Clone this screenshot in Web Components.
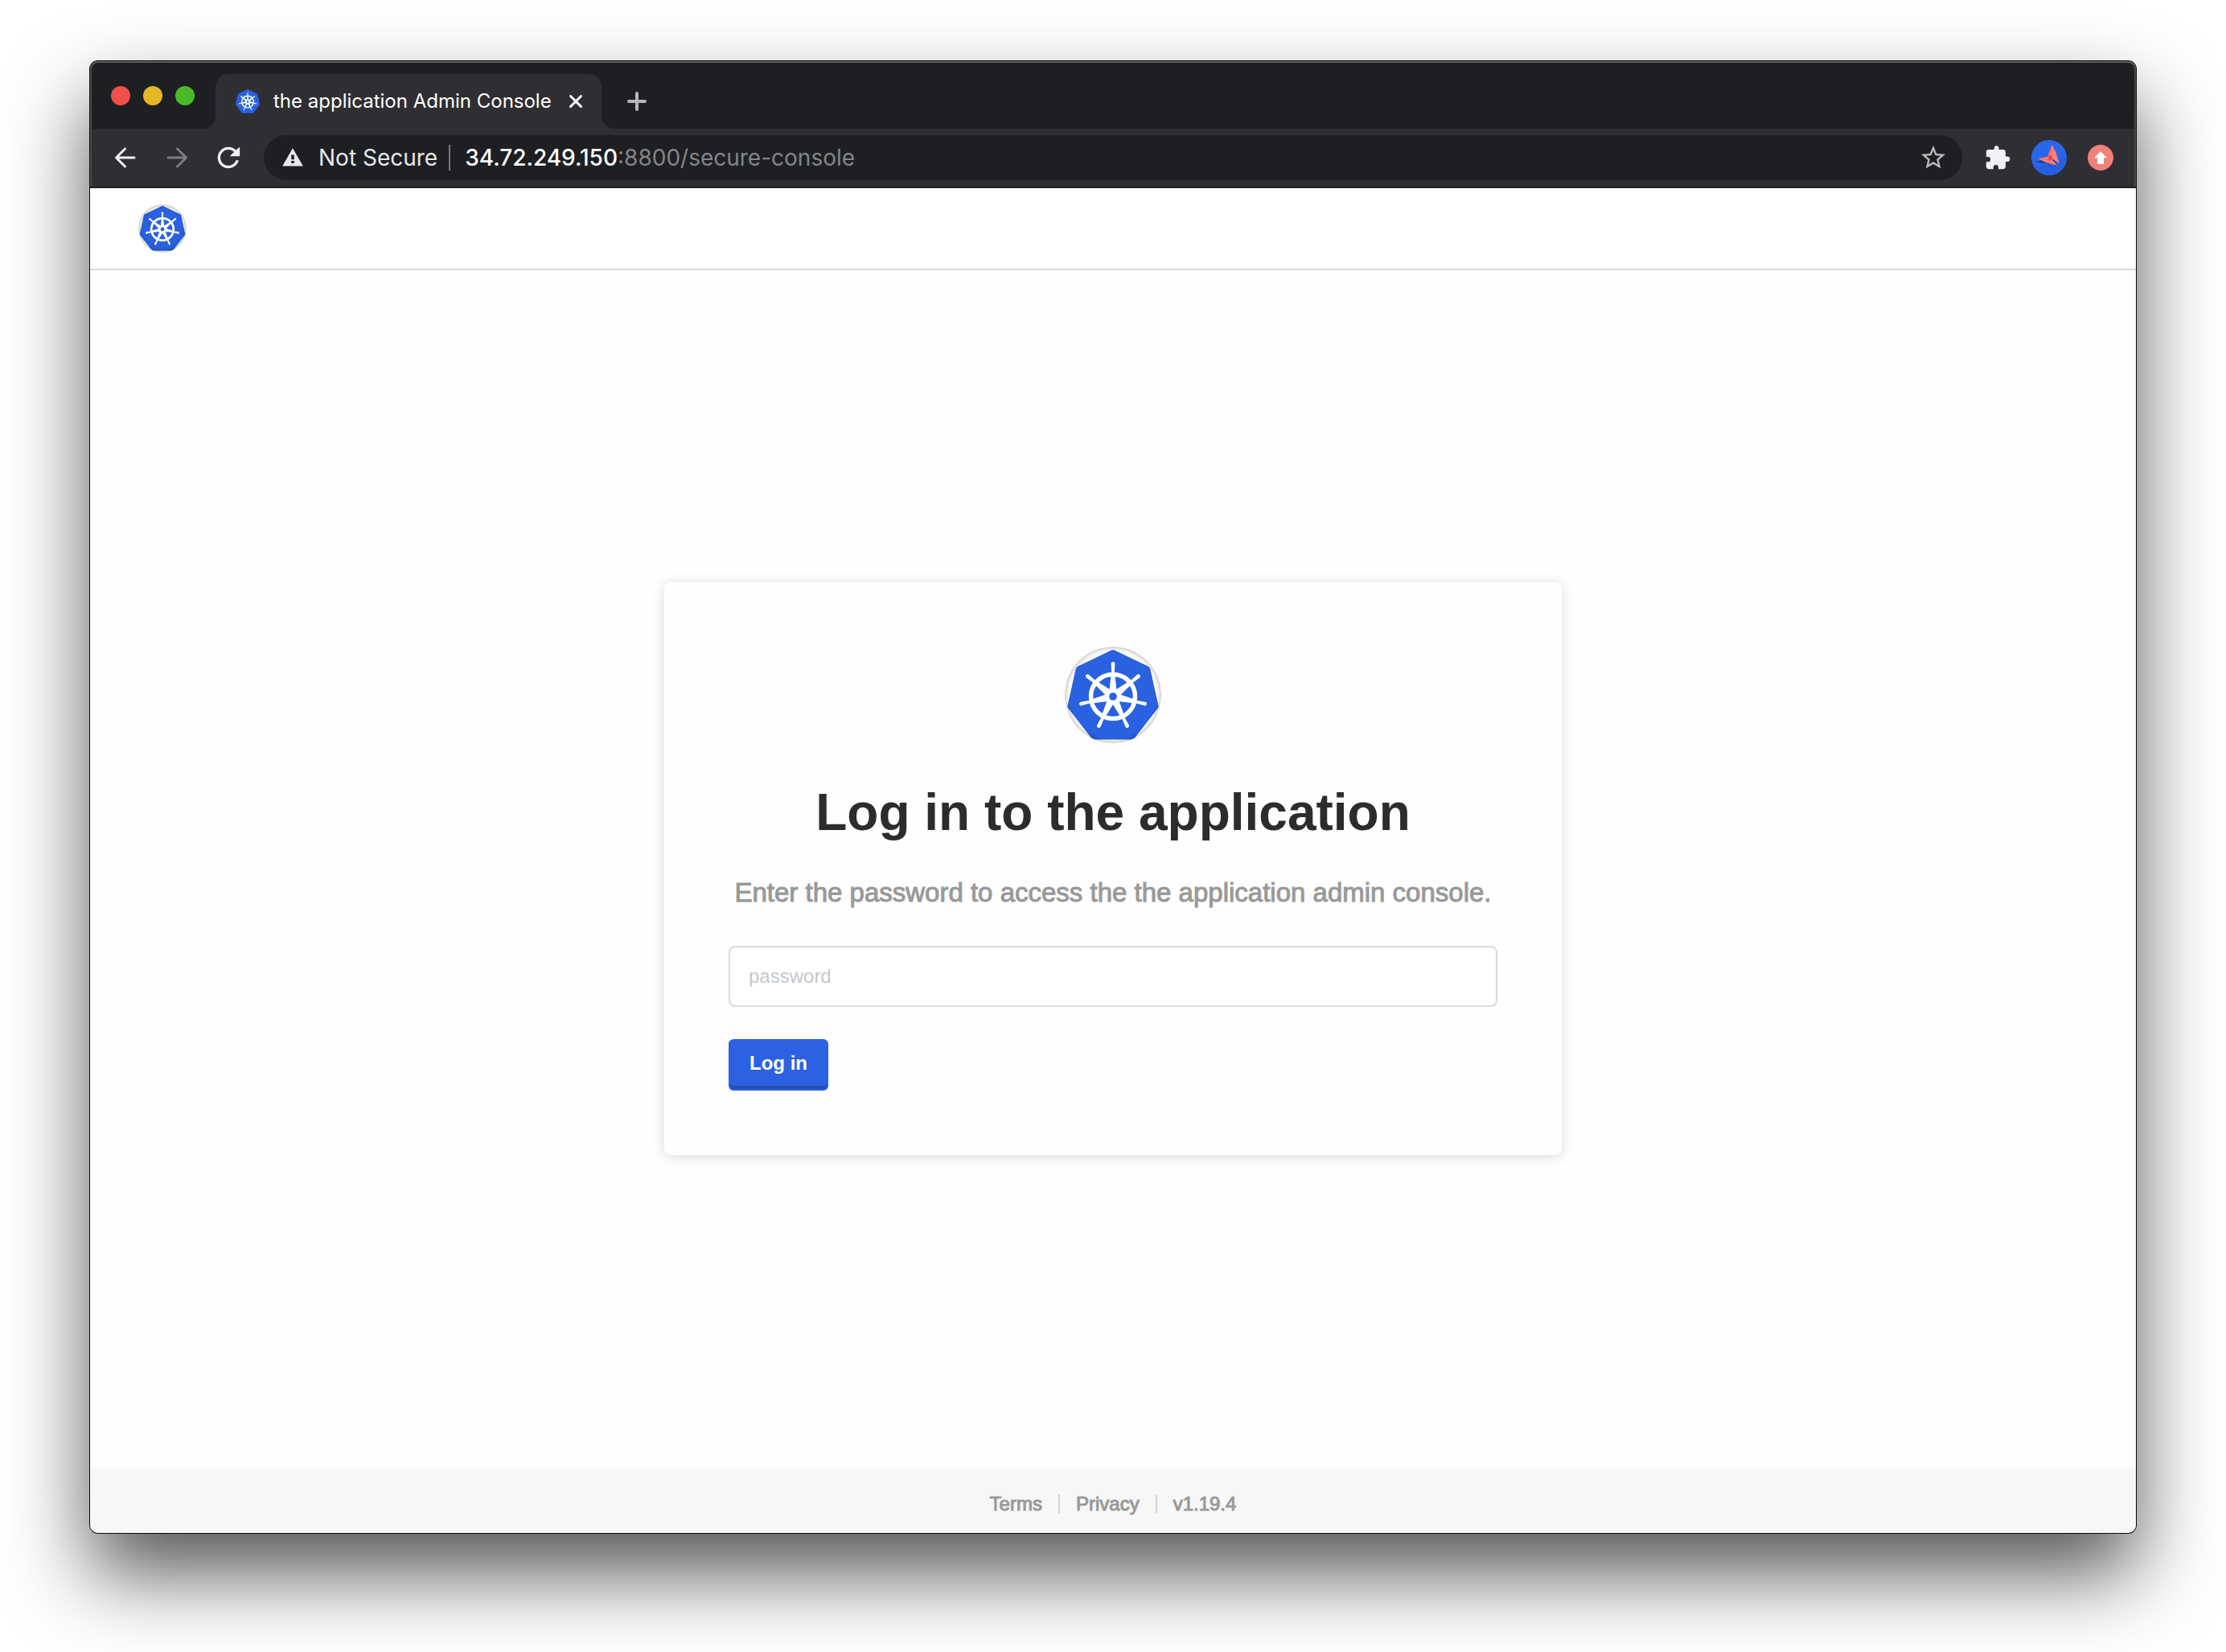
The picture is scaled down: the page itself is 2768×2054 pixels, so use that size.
<!DOCTYPE html>
<html lang="en">
<head>
<meta charset="utf-8">
<title>the application Admin Console</title>
<style>
  html, body { height: 100%; }
  body {
    margin: 0;
    background: #fff;
    font-family: "Liberation Sans", Arial, sans-serif;
    font-size: 24px;
  }
</style>
</head>
<body>
<browser-window>
  <tab-strip slot="tabs" label="the application Admin Console"></tab-strip>
  <tool-bar slot="toolbar">
    <address-bar slot="address" host="34.72.249.150" rest=":8800/secure-console"></address-bar>
  </tool-bar>
  <site-header></site-header>
  <site-main>
    <login-card>
      <span slot="title">Log in to the application</span>
      <span slot="hint">Enter the password to access the the application admin console.</span>
    </login-card>
  </site-main>
  <site-footer>
    <a href="#terms">Terms</a>
    <a href="#privacy">Privacy</a>
    <span>v1.19.4</span>
  </site-footer>
</browser-window>

<script>
const define = (name, html, setup) => {
  const template = document.createElement('template');
  template.innerHTML = html;
  customElements.define(name, class extends HTMLElement {
    constructor() {
      super();
      this.attachShadow({ mode: 'open' }).append(template.content.cloneNode(true));
    }
    connectedCallback() {
      if (setup) setup(this, this.shadowRoot);
    }
  });
};

const spokes = Array.from({ length: 7 }, (_, i) =>
  `<g transform="rotate(${(i * 360 / 7).toFixed(2)} 60 62)">
     <path d="M55.500 54.500 57.500 36h5l2 18.500z"/>
     <path d="M58.300 34.500 57.600 21.500a2.400 2.400 0 0 1 4.800 0L61.700 34.500z"/>
   </g>`).join('');

define('helm-logo', `
  <style>
    :host { display: block; flex: none; width: var(--logo-size, 32px); height: var(--logo-size, 32px); position: relative; }
    :host([round]) { border-radius: 50%; overflow: hidden; }
    :host([round])::after {
      content: ""; position: absolute; inset: 0; border-radius: 50%;
      box-shadow: inset 0 0 6px rgba(0, 0, 0, .4);
    }
    svg { display: block; width: 100%; height: 100%; }
  </style>
  <svg viewBox="0 0 120 120" aria-hidden="true">
    <path d="M60 9 101.500 29 111.500 74 83 110.500H37L8.500 74 18.500 29z" fill="#2a61e0" stroke="#2a61e0" stroke-width="10" stroke-linejoin="round"/>
    <circle cx="60" cy="62" r="27.500" fill="none" stroke="#fff" stroke-width="5.500"/>
    <g fill="#fff">${spokes}<circle cx="60" cy="62" r="9"/></g>
    <circle cx="60" cy="62" r="4.800" fill="#2a61e0"/>
  </svg>`);

define('browser-window', `
  <style>
    :host {
      display: flex; flex-direction: column; box-sizing: border-box;
      min-height: 100vh; padding: 76px 112px 148px; overflow: hidden;
    }
    .frame {
      flex: 1; display: flex; flex-direction: column;
      border-radius: 10px; background: #fefefe;
      box-shadow: 0 0 0 1px #0a0a0a, 0 50px 100px rgba(0, 0, 0, .67);
    }
    .chrome {
      display: flex; flex-direction: column; overflow: hidden; position: relative;
      border-radius: 10px 10px 0 0; background: #2f2e32; border-bottom: 2px solid #231f22;
    }
    .chrome::after {
      content: ""; position: absolute; inset: 0; pointer-events: none; border-radius: 10px 10px 0 0;
      box-shadow: inset 0 2px 0 #5f6062, inset 2px 0 0 #4b4b4d, inset -2px 0 0 #4b4b4d;
    }
  </style>
  <div class="frame">
    <div class="chrome"><slot name="tabs"></slot><slot name="toolbar"></slot></div>
    <slot></slot>
  </div>`);

define('tab-strip', `
  <style>
    :host { display: flex; height: 84px; background: #1e1f22; font-family: Inter, sans-serif; }
    .lights { display: flex; gap: 16px; padding: 31px 26px 0; }
    .lights button { width: 24px; height: 24px; padding: 0; border: 0; border-radius: 50%; background: var(--c); }
    .tab {
      display: flex; align-items: center; box-sizing: border-box; position: relative;
      width: 480px; margin-top: 16px; padding: 0 16px 0 24px;
      background: #2f2e32; border-radius: 16px 16px 0 0; color: #fff;
    }
    .tab::before, .tab::after {
      content: ""; position: absolute; bottom: 0; width: 16px; height: 16px;
    }
    .tab::before { right: 100%; background: radial-gradient(circle at 0 0, transparent 16px, #2f2e32 16px); }
    .tab::after { left: 100%; background: radial-gradient(circle at 100% 0, transparent 16px, #2f2e32 16px); }
    .title { flex: 1; margin-left: 16px; font-size: 24px; line-height: 32px; white-space: nowrap; }
    .icon { display: grid; place-items: center; width: 32px; height: 32px; padding: 0; border: 0; background: none; }
    .add { margin: 34px 0 0 28px; }
    svg { display: block; fill: none; stroke-linecap: round; }
  </style>
  <div class="lights">
    <button style="--c:#ef5049" aria-label="Close window"></button>
    <button style="--c:#e3b726" aria-label="Minimise window"></button>
    <button style="--c:#4bb928" aria-label="Zoom window"></button>
  </div>
  <div class="tab">
    <helm-logo></helm-logo>
    <span class="title"></span>
    <button class="icon" aria-label="Close tab"><svg width="20" height="20" viewBox="0 0 20 20" stroke="#fff" stroke-width="3"><path d="M3.500 3.500l13 13M16.500 3.500l-13 13"/></svg></button>
  </div>
  <button class="icon add" aria-label="New tab"><svg width="26" height="26" viewBox="0 0 26 26" stroke="#b5b7bc" stroke-width="4"><path d="M13 3v20M3 13h20"/></svg></button>`,
  (host, root) => { root.querySelector('.title').textContent = host.getAttribute('label'); });

define('tool-bar', `
  <style>
    :host { display: flex; align-items: center; gap: 8px; height: 72px; padding: 0 16px; }
    button { display: grid; place-items: center; width: 56px; height: 56px; padding: 0; border: 0; background: none; }
    slot { display: flex; flex: 1; margin: 0 8px; }
    svg { display: block; }
    .line { fill: none; stroke-width: 3; stroke-linecap: round; stroke-linejoin: round; }
  </style>
  <button aria-label="Back"><svg class="line" width="32" height="32" viewBox="0 0 32 32" stroke="#f1f1f3"><path d="M15.500 5l-11 11 11 11M5 16h22"/></svg></button>
  <button aria-label="Forward"><svg class="line" width="32" height="32" viewBox="0 0 32 32" stroke="#7d7d80"><path d="M16.500 5l11 11-11 11M27 16H5"/></svg></button>
  <button aria-label="Reload"><svg width="40" height="40" viewBox="0 0 24 24" fill="#f1f1f3"><path d="M17.650 6.350C16.200 4.900 14.210 4 12 4c-4.420 0-7.990 3.580-7.990 8s3.570 8 7.990 8c3.730 0 6.840-2.550 7.730-6h-2.080c-.82 2.330-3.040 4-5.650 4-3.310 0-6-2.690-6-6s2.690-6 6-6c1.660 0 3.140.69 4.220 1.780L13 11h7.500V4l-2.850 2.350z"/></svg></button>
  <slot name="address"></slot>
  <button aria-label="Extensions"><svg width="34" height="34" viewBox="0 0 24 24" fill="#f1f1f3"><path d="M20.500 11H19V7c0-1.100-.9-2-2-2h-4V3.500a2 2 0 0 0-4 0V5H4c-1.100 0-1.990.9-1.990 2v4.300H3.500a2.200 2.200 0 0 1 0 4.400H2V20c0 1.100.9 2 2 2h4.300v-1.500a2.200 2.200 0 0 1 4.400 0V22H17c1.100 0 2-.9 2-2v-4.500h1.500a2.250 2.250 0 0 0 0-4.500z"/></svg></button>
  <button aria-label="Profile"><svg width="44" height="44" viewBox="0 0 132 132">
    <circle cx="66" cy="66" r="66" fill="#2a66ea"/>
    <path d="M64 86 131 58A66 66 0 0 1 12 104z" fill="#2660e0"/>
    <path d="M16 80 60 72 78 112 62 88 34 86zM84 84l10 8-4 10z" fill="#1d3f9e"/>
    <path d="M77 18 61 60 70 76 84 70z" fill="#fa7268"/>
    <path d="M77 18 92 48 104 88 76 66z" fill="#ff8177"/>
    <path d="M25 70 62 62 82 76 96 95 56 85z" fill="#ff7b72"/>
    <path d="M62 60 74 58 80 70 66 78z" fill="#ea4540"/>
    <path d="M76 70 104 88 84 79z" fill="#e25a56"/>
    <path d="M76 74 84 76 98 90 92 89z" fill="#2151c4"/>
  </svg></button>
  <button aria-label="Update"><svg width="32" height="32" viewBox="0 0 96 96"><circle cx="48" cy="48" r="48" fill="#f0807a"/><path d="M48 25 72 49H60V72H36V49H24z" fill="#fff"/></svg></button>`);

define('address-bar', `
  <style>
    :host {
      display: flex; align-items: center; flex: 1; height: 56px; box-sizing: border-box;
      padding: 0 18px 0 22px; border-radius: 28px; background: #1e1f22;
      font: 28px/40px Inter, sans-serif; color: #e7e8ea; white-space: nowrap;
    }
    svg { display: block; }
    .state { margin-left: 18px; padding-right: 14px; }
    .rule { width: 2px; height: 32px; background: #76777a; }
    .url { flex: 1; margin-left: 18px; color: #848587; outline: 0; }
    .host { color: #fff; font-weight: 500; }
    button { padding: 0; border: 0; background: none; }
  </style>
  <svg width="28" height="28" viewBox="0 0 24 24" fill="#e7e8ea"><path d="M1 21h22L12 2 1 21zm12.500-3h-3v-2.500h3V18zm0-4h-3V9h3v5z"/></svg>
  <span class="state">Not Secure</span>
  <span class="rule"></span>
  <div class="url" role="textbox" aria-label="Address" tabindex="0"><span class="host"></span><span class="rest"></span></div>
  <button aria-label="Bookmark this page"><svg width="36" height="36" viewBox="0 0 24 24" fill="#b9b9b7"><path d="M22 9.240l-7.190-.62L12 2 9.190 8.630 2 9.240l5.460 4.730L5.820 21 12 17.270 18.180 21l-1.630-7.030L22 9.240zM12 15.400l-3.760 2.270 1-4.280-3.320-2.880 4.380-.38L12 6.100l1.710 4.040 4.380.38-3.320 2.880 1 4.280L12 15.400z"/></svg></button>`,
  (host, root) => {
    root.querySelector('.host').textContent = host.getAttribute('host');
    root.querySelector('.rest').textContent = host.getAttribute('rest');
  });

define('site-header', `
  <style>
    :host { display: flex; align-items: center; height: 100px; padding: 0 60px; background: #fff; border-bottom: 2px solid #d9d9d9; --logo-size: 60px; }
  </style>
  <helm-logo round></helm-logo>`);

define('site-main', `
  <style>:host { display: flex; flex: 1; align-items: center; justify-content: center; padding-bottom: 2px; }</style>
  <slot></slot>`);

define('login-card', `
  <style>
    :host {
      display: flex; flex-direction: column; align-items: center; box-sizing: border-box;
      width: 1116px; max-width: 100%; padding: 80px; border-radius: 8px; background: #fefefe;
      box-shadow: 0 2px 16px rgba(0, 0, 0, .14); --logo-size: 120px;
    }
    h1 { margin: 48px 0 0; font-size: 64px; line-height: 76px; font-weight: 700; color: #2c2c2c; }
    p { margin: 40px 0 0; font-size: 33px; line-height: 44px; color: #999; -webkit-text-stroke: 1px #999; white-space: nowrap; }
    form { display: flex; flex-direction: column; align-items: flex-start; gap: 40px; width: 100%; margin-top: 44px; }
    input {
      box-sizing: border-box; width: 100%; height: 76px; padding: 0 23px;
      border: 2px solid #d9d9d9; border-radius: 8px; background: #fff;
      font: inherit; color: #323232;
    }
    input::placeholder { color: #c4c7ca; opacity: 1; }
    button {
      height: 64px; padding: 0 24px 4px; border: 2px solid #2c62e2; border-radius: 6px;
      background: #2c62e2; box-shadow: inset 0 -4px 0 #244eb0;
      font: 700 24px/28px "Liberation Sans", Arial, sans-serif; color: #fff;
    }
  </style>
  <helm-logo round></helm-logo>
  <h1><slot name="title"></slot></h1>
  <p><slot name="hint"></slot></p>
  <form>
    <input type="password" placeholder="password" aria-label="password" autocomplete="current-password">
    <button type="submit">Log in</button>
  </form>`);

define('site-footer', `
  <style>
    :host {
      display: flex; align-items: center; justify-content: center; height: 80px; padding-top: 8px; box-sizing: border-box;
      border-radius: 0 0 10px 10px; background: #f7f7f7; line-height: 24px; color: #999; -webkit-text-stroke: 1px #999;
    }
    ::slotted(*) { color: #999; text-decoration: none; padding-right: 20px; }
    ::slotted(:not(:first-child)) { border-left: 2px solid #d5d5d5; padding-left: 20px; }
    ::slotted(:last-child) { padding-right: 0; }
  </style>
  <slot></slot>`);
</script>
</body>
</html>
